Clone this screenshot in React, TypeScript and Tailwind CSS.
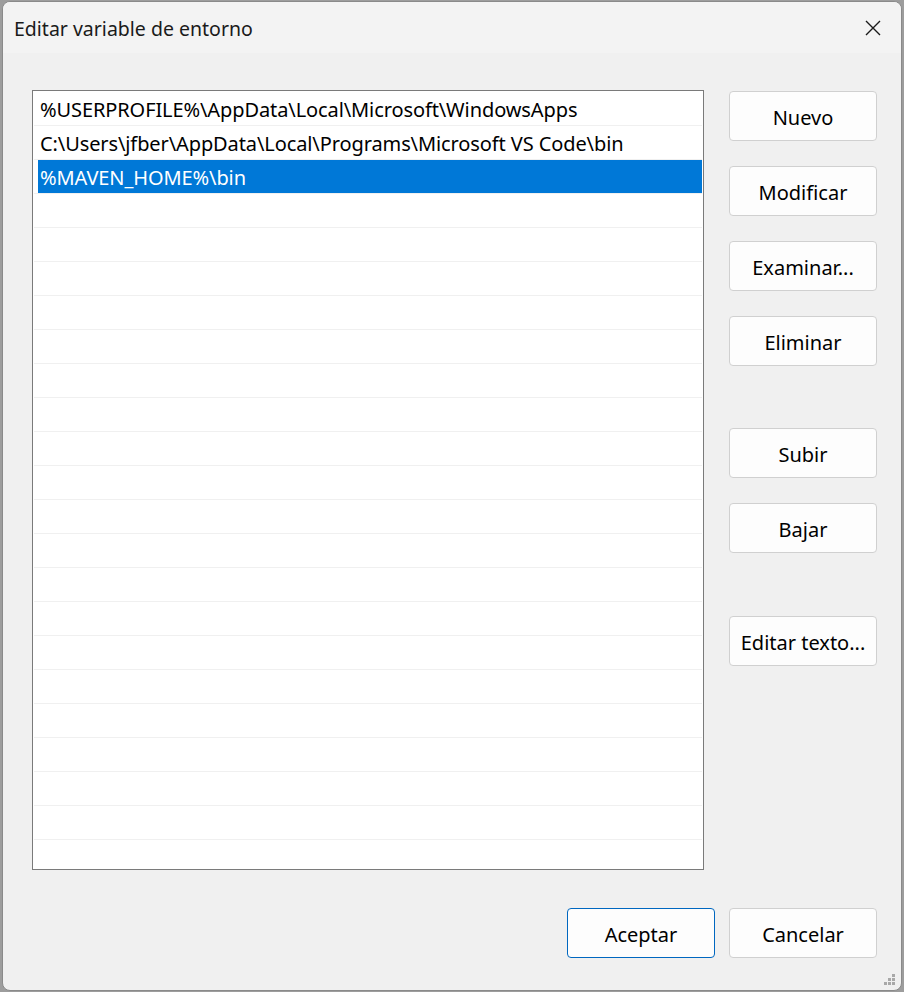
import React from "react";

const rows = [
  "%USERPROFILE%\\AppData\\Local\\Microsoft\\WindowsApps",
  "C:\\Users\\jfber\\AppData\\Local\\Programs\\Microsoft VS Code\\bin",
  "%MAVEN_HOME%\\bin",
];

function Btn({ label, primary }: { label: string; primary?: boolean }) {
  return (
    <div
      className={
        "w-[148px] h-[50px] shrink-0 flex items-center justify-center pt-[3px] rounded-[4px] bg-[#fdfdfd] text-[20px] text-black border " +
        (primary ? "border-[#0067c0]" : "border-[#d0d0d0]")
      }
    >
      {label}
    </div>
  );
}

export default function App() {
  const all = Array.from({ length: 24 }, (_, i) => rows[i] ?? "");
  return (
    <div
      className="w-[904px] h-[992px] bg-[#9d9d9d] pl-[2px] pt-[1px] overflow-hidden"
      style={{ fontFamily: '"Noto Sans", "Open Sans", sans-serif' }}
    >
      <div className="w-[900px] h-[990px] rounded-[8px] border border-[#8a8a8a] bg-[#f0f0f0] overflow-hidden flex flex-col relative">
        <div className="h-[51px] shrink-0 bg-[#f3f3f3] flex items-center justify-between pl-[11px] pr-[20px]">
          <span className="text-[19.5px] text-[#1a1a1a] leading-none mt-[2px]">Editar variable de entorno</span>
          <svg width="16" height="16" viewBox="0 0 16 16" className="mt-[1px]">
            <path d="M1 1 L15 15 M15 1 L1 15" stroke="#1a1a1a" strokeWidth="1.4" fill="none" />
          </svg>
        </div>
        <div className="flex pl-[29px] pt-[37px] gap-[25px]">
          <div className="w-[672px] h-[780px] bg-white border border-[#7a7a7a] overflow-hidden pt-[1px] px-[1px]">
            {all.map((t, i) => {
              const sel = i === 2;
              return (
                <div key={i} className="h-[34px] border-b border-[#f0f0f0] flex items-stretch">
                  <div
                    className={
                      "flex-1 flex items-center pl-[2px] pt-[2px] ml-[4px] text-[20px] tracking-[-0.1px] whitespace-nowrap " +
                      (sel ? "bg-[#0078d7] text-white" : "text-black")
                    }
                  >
                    {t}
                  </div>
                </div>
              );
            })}
          </div>
          <div className="flex flex-col pt-[1px]">
            <Btn label="Nuevo" />
            <div className="h-[25px]" />
            <Btn label="Modificar" />
            <div className="h-[25px]" />
            <Btn label="Examinar..." />
            <div className="h-[25px]" />
            <Btn label="Eliminar" />
            <div className="h-[62px]" />
            <Btn label="Subir" />
            <div className="h-[25px]" />
            <Btn label="Bajar" />
            <div className="h-[63px]" />
            <Btn label="Editar texto..." />
          </div>
        </div>
        <div className="flex justify-end gap-[14px] pr-[24px] mt-[38px]">
          <Btn label="Aceptar" primary />
          <Btn label="Cancelar" />
        </div>
        <div className="absolute right-[5px] bottom-[4px] w-[12px] h-[12px]">
          <svg width="12" height="12" viewBox="0 0 12 12">
            <rect x="8" y="0" width="3" height="3" fill="#a8a8a8" />
            <rect x="4" y="4" width="3" height="3" fill="#a8a8a8" />
            <rect x="8" y="4" width="3" height="3" fill="#a8a8a8" />
            <rect x="0" y="8" width="3" height="3" fill="#a8a8a8" />
            <rect x="4" y="8" width="3" height="3" fill="#a8a8a8" />
            <rect x="8" y="8" width="3" height="3" fill="#a8a8a8" />
          </svg>
        </div>
      </div>
    </div>
  );
}
